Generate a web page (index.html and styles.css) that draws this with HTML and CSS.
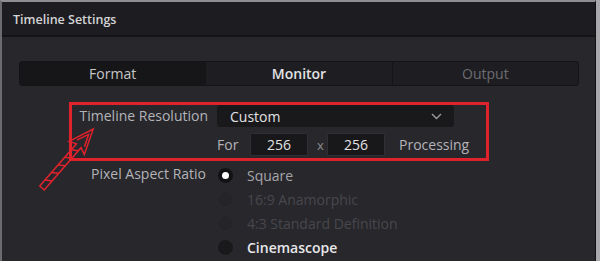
FILE: index.html
```html
<!DOCTYPE html>
<html lang="en">
<head>
    <meta charset="UTF-8">
    <title>Timeline Settings</title>
    <link rel="stylesheet" href="styles.css">
</head>
<body>
    <div class="window">
        <div class="title-bar">Timeline Settings</div>

        <div class="content">
            <div class="tabs">
                <div class="tab active">Format</div>
                <div class="tab current">Monitor</div>
                <div class="tab disabled">Output</div>
            </div>

            <div class="form">
                <div class="label">Timeline Resolution</div>
                <div class="dropdown">
                    <span>Custom</span>
                    <svg width="11" height="7" viewBox="0 0 11 7"><polyline points="1,1 5.5,5.5 10,1" fill="none" stroke="#9a9a9e" stroke-width="1.4"/></svg>
                </div>

                <div class="label"></div>
                <div class="size-row">
                    <span class="hint">For</span>
                    <div class="num-input">256</div>
                    <span class="times">x</span>
                    <div class="num-input">256</div>
                    <span class="hint processing">Processing</span>
                </div>

                <div class="label aspect-label">Pixel Aspect Ratio</div>
                <div class="radio-list">
                    <div class="radio-item checked"><span class="radio"></span>Square</div>
                    <div class="radio-item disabled"><span class="radio"></span>16:9 Anamorphic</div>
                    <div class="radio-item disabled"><span class="radio"></span>4:3 Standard Definition</div>
                    <div class="radio-item bright"><span class="radio"></span>Cinemascope</div>
                </div>
            </div>
        </div>

        <!-- пометки поверх окна -->
        <div class="highlight-box"></div>
        <svg class="annotation" width="600" height="261" viewBox="0 0 600 261">
            <g transform="translate(42 188) rotate(-49)" stroke="#e0222c" stroke-width="1.5" fill="none">
                <polygon points="0,-3 56,-3 53,-10 78,0 53,10 56,3 0,3"/>
                <polyline points="59,-5 71,0 59,5"/>
                <line x1="8" y1="-3" x2="12" y2="3"/>
                <line x1="18" y1="-3" x2="22" y2="3"/>
                <line x1="28" y1="-3" x2="32" y2="3"/>
                <line x1="38" y1="-3" x2="42" y2="3"/>
                <line x1="48" y1="-3" x2="52" y2="3"/>
            </g>
        </svg>
    </div>
</body>
</html>
```

FILE: styles.css
```css
body {
    margin: 0;
    padding: 0;
    background-color: #a9a9ab;
    font-family: 'Open Sans', 'DejaVu Sans', sans-serif;
    overflow: hidden;
}

.window {
    position: relative;
    width: 593px;
    height: 259px;
    border-top: 2px solid #8e8e92;
    border-left: 2px solid #6c6c70;
    border-right: 1px solid #111113;
    background-color: #27272c;
}

.title-bar {
    height: 33px;
    line-height: 36px;
    padding-left: 11px;
    background-color: #1d1d21;
    border-bottom: 2px solid #141417;
    color: #d4d4d6;
    font-size: 12.5px;
    font-weight: 600;
}

.content {
    padding: 24px 16px 0 17px;
}

.tabs {
    display: flex;
    height: 23px;
    background-color: #1e1e22;
    border: 1px solid #141416;
    border-radius: 3px;
}

.tab {
    flex: 1;
    text-align: center;
    line-height: 23px;
    font-size: 14px;
    color: #c6c6c8;
    border-right: 1px solid #141416;
}

.tab:last-child {
    border-right: none;
}

.tab.active {
    background-color: #161618;
}

.tab.current {
    color: #e2e2e4;
    font-weight: 600;
}

.tab.disabled {
    color: #6c6c70;
}

.form {
    display: grid;
    grid-template-columns: 189px 1fr;
    column-gap: 9px;
    row-gap: 6px;
    margin-top: 19px;
    font-size: 14px;
}

.label {
    text-align: right;
    color: #b4b4b8;
    line-height: 22px;
}

.dropdown {
    display: flex;
    align-items: center;
    justify-content: space-between;
    width: 237px;
    height: 22px;
    box-sizing: border-box;
    padding: 0 12px 0 13px;
    background-color: #19191b;
    border-radius: 3px;
    color: #e2e2e4;
}

.size-row {
    display: flex;
    align-items: center;
    height: 23px;
    color: #b4b4b8;
}

.num-input {
    width: 58px;
    height: 23px;
    box-sizing: border-box;
    line-height: 21px;
    text-align: center;
    background-color: #18181a;
    border: 1px solid #303034;
    border-radius: 2px;
    color: #e2e2e4;
}

.hint {
    width: 33px;
}

.times {
    margin: 0 4px 0 9px;
    width: 6px;
    font-size: 13px;
    color: #8c8c90;
}

.processing {
    width: auto;
    margin-left: 14px;
}

.aspect-label {
    margin-top: 1px;
    margin-right: 2px;
}

.radio-list {
    margin-top: 1px;
}

.radio-item {
    display: flex;
    align-items: center;
    height: 24px;
    color: #a6a6aa;
}

.radio {
    width: 17px;
    height: 17px;
    margin-right: 13px;
    border-radius: 50%;
    background-color: #1f1f22;
    box-sizing: border-box;
    border: 1px solid #2c2c30;
    position: relative;
}

.radio-item.checked .radio {
    background-color: #121214;
}

.radio-item.checked .radio::after {
    content: '';
    position: absolute;
    left: 4px;
    top: 4px;
    width: 7px;
    height: 7px;
    border-radius: 50%;
    background-color: #ffffff;
}

.radio-item.disabled {
    color: #47474c;
}

.radio-item.disabled .radio {
    background-color: #252529;
}

.radio-item.bright {
    color: #e8e8ea;
    font-weight: 600;
}

.radio-item.bright .radio {
    background-color: #19191b;
}

.highlight-box {
    position: absolute;
    left: 67px;
    top: 100px;
    width: 420px;
    height: 59px;
    box-sizing: border-box;
    border: 3px solid #e0222c;
}

.annotation {
    position: absolute;
    left: -2px;
    top: -2px;
    pointer-events: none;
}
```
